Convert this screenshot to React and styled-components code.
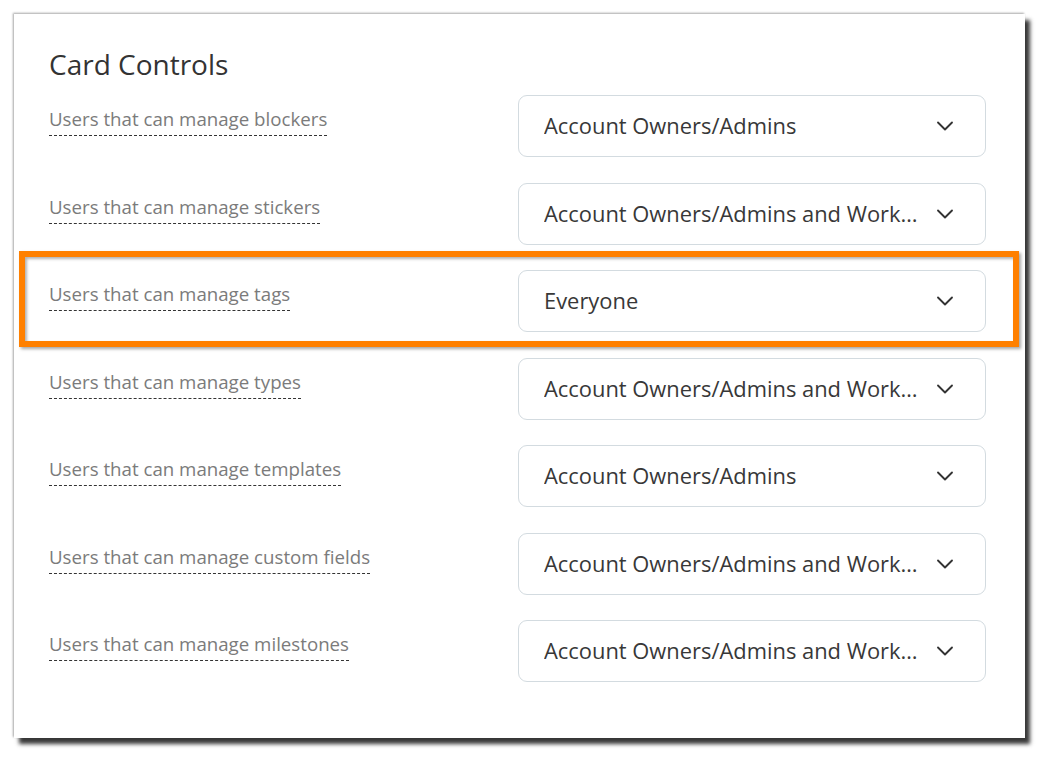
import React from 'react';
import styled, { createGlobalStyle } from 'styled-components';
import { ChevronDown } from 'lucide-react';

const GlobalStyles = createGlobalStyle`
  html, body {
    margin: 0;
    padding: 0;
    background: #ffffff;
    font-family: "Open Sans", "Noto Sans", sans-serif;
  }
`;

const Page = styled.div`
  padding: 14px 0 0 14px;
  width: 1052px;
  height: 766px;
  box-sizing: border-box;
`;

const Card = styled.section`
  width: 1011px;
  height: 724px;
  box-sizing: border-box;
  background: #fff;
  padding: 32px 39px 0 35px;
  box-shadow: 5px 6px 4px rgba(0, 0, 0, 0.78), -1px -1px 2px rgba(0, 0, 0, 0.35);
`;

const Title = styled.h2`
  margin: 0 0 13px;
  font-size: 28px;
  line-height: 36px;
  font-weight: 400;
  color: #333;
`;

const List = styled.div`
  display: flex;
  flex-direction: column;
  gap: 25.5px;
`;

const Row = styled.div`
  position: relative;
  display: grid;
  grid-template-columns: 1fr 468px;
  align-items: start;
`;

const Highlight = styled.div`
  position: absolute;
  top: -19px;
  left: -30px;
  right: -33px;
  bottom: -15px;
  border: 6px solid #ff8000;
  box-shadow: 2px 2px 3px rgba(0, 0, 0, 0.35), inset 2px 2px 3px rgba(0, 0, 0, 0.3);
  pointer-events: none;
`;

const LabelCell = styled.div`
  padding-top: 12px;
`;

const Label = styled.span`
  display: inline-block;
  font-size: 18.7px;
  line-height: 24px;
  color: #7b7b7b;
  padding-bottom: 4px;
  border-bottom: 1px dashed #333;
`;

const Select = styled.div`
  height: 62px;
  box-sizing: border-box;
  border: 1px solid #d3dbe0;
  border-radius: 9px;
  display: flex;
  align-items: center;
  padding: 0 26px 0 25px;
  gap: 12px;
  color: #383838;
  font-size: 21.9px;
`;

const Value = styled.span`
  flex: 1;
  min-width: 0;
  white-space: nowrap;
  overflow: hidden;
  text-overflow: ellipsis;
  margin-top: -1px;
`;

const rows = [
  { label: 'Users that can manage blockers', value: 'Account Owners/Admins' },
  { label: 'Users that can manage stickers', value: 'Account Owners/Admins and Workspace Managers' },
  { label: 'Users that can manage tags', value: 'Everyone', highlight: true },
  { label: 'Users that can manage types', value: 'Account Owners/Admins and Workspace Managers' },
  { label: 'Users that can manage templates', value: 'Account Owners/Admins' },
  { label: 'Users that can manage custom fields', value: 'Account Owners/Admins and Workspace Managers' },
  { label: 'Users that can manage milestones', value: 'Account Owners/Admins and Workspace Managers' },
];

const App = () => {
  return (
    <>
      <GlobalStyles />
      <Page>
        <Card>
          <Title>Card Controls</Title>
          <List>
            {rows.map((row) => (
              <Row key={row.label}>
                <LabelCell>
                  <Label>{row.label}</Label>
                </LabelCell>
                <Select>
                  <Value>{row.value}</Value>
                  <ChevronDown size={28} strokeWidth={1.6} color="#333" />
                </Select>
                {row.highlight && <Highlight />}
              </Row>
            ))}
          </List>
        </Card>
      </Page>
    </>
  );
};

export default App;
